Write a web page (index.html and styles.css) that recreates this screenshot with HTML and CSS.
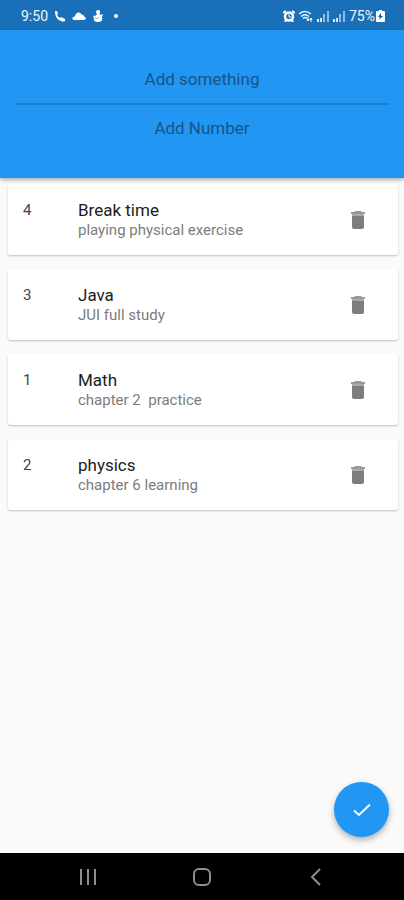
FILE: index.html
```html
<!DOCTYPE html>
<html lang="en">
<head>
<meta charset="utf-8">
<meta name="viewport" content="width=device-width, initial-scale=1">
<title>Tasks</title>
<link rel="stylesheet" href="styles.css">
</head>
<body>
<svg class="defs" aria-hidden="true">
  <symbol id="trash" viewBox="0 0 14 18">
    <path fill="#999" d="M4 0h6l1 1h3v2H0V1h3z"/>
    <path fill="#aaa" d="M1 3h12v2H1z"/>
    <path fill="#7d7d7d" d="M1 5h12v11a2 2 0 0 1-2 2H3a2 2 0 0 1-2-2z"/>
  </symbol>
  <symbol id="signal" viewBox="0 0 12 12">
    <path d="M0 9h2v3H0zM3 8h2v4H3z" fill="#d8e8f6"/>
    <path d="M6 4h2v8H6zM10 1h2v11h-2z" fill="#8fbce2"/>
  </symbol>
</svg>
<div class="status">
  <div class="status-group">
    <span class="clock">9:50</span>
    <svg width="12" height="12" viewBox="0 0 12 12"><path fill="#fff" d="M1 1h2l1 3-1 1q1 2 3 3l1-1 4 2v2q-1 1-4 0Q1 9 1 1z"/></svg>
    <svg width="14" height="12" viewBox="0 0 14 12"><path fill="#fff" d="M2 10C-.5 9.500 0 6.500 3 6.500c.5-4.500 5-5.500 6.500-2C11.500 4.500 12 6 12 6.500c2.500.5 2 3.500 0 3.500z"/></svg>
    <svg width="12" height="12" viewBox="0 0 12 12"><path fill="#fff" d="M6 0c2 0 3 2 1.500 3.500L8.500 5 11 4l-1 3c1 3-1 5-4 5s-5-2-4-4L1 6l3-.5L5 4C3.500 2.500 4 0 6 0z"/><path stroke="#7fb0da" d="M3 8l2 1 2-2" fill="none"/></svg>
    <svg class="dot" width="4" height="4" viewBox="0 0 4 4"><circle cx="2" cy="2" r="2" fill="#fff"/></svg>
  </div>
  <div class="status-group status-right">
    <svg width="12" height="12" viewBox="0 0 12 12"><circle cx="6" cy="6.500" r="4" fill="none" stroke="#fff" stroke-width="2.500"/><path d="M0 3 3 1M12 3 9 1M3 10l-1 2M9 10l1 2" fill="none" stroke="#fff" stroke-width="2"/><path d="M6 4v3h2" fill="none" stroke="#fff"/></svg>
    <svg width="14" height="12" viewBox="0 0 14 12"><path d="M0 4q6-5 12 0M2 6.500q4-3.500 8 0M4 8.500q2-2 4 0" fill="none" stroke="#e4effa" stroke-width="1.500"/><path d="M9 7v4M12 8v4M8 9l1 2 1-2M11 10l1-2 1 2" fill="none" stroke="#fff"/></svg>
    <svg width="12" height="12"><use href="#signal"/></svg>
    <svg width="12" height="12"><use href="#signal"/></svg>
    <span class="battery">75%</span>
    <svg width="9" height="12" viewBox="0 0 9 12"><path fill="#fff" d="M3 0h3v1h2q1 0 1 1v9q0 1-1 1H1q-1 0-1-1V2q0-1 1-1h2z"/><path fill="#16588f" d="M5 3 2 7h2l-1 3 4-4H5z"/></svg>
  </div>
</div>
<form class="entry" id="entry">
  <input class="field underlined" type="text" placeholder="Add something" aria-label="Add something">
  <input class="field" type="text" inputmode="numeric" placeholder="Add Number" aria-label="Add Number">
</form>
<main class="content">
  <ul class="list">
    <li class="card"><span class="num">4</span><div class="text"><h2>Break time</h2><p>playing physical exercise</p></div><button class="delete" type="button" aria-label="Delete Break time"><svg width="14" height="18"><use href="#trash"/></svg></button></li>
    <li class="card"><span class="num">3</span><div class="text"><h2>Java</h2><p>JUI full study</p></div><button class="delete" type="button" aria-label="Delete Java"><svg width="14" height="18"><use href="#trash"/></svg></button></li>
    <li class="card"><span class="num">1</span><div class="text"><h2>Math</h2><p>chapter 2&nbsp; practice</p></div><button class="delete" type="button" aria-label="Delete Math"><svg width="14" height="18"><use href="#trash"/></svg></button></li>
    <li class="card"><span class="num">2</span><div class="text"><h2>physics</h2><p>chapter 6 learning</p></div><button class="delete" type="button" aria-label="Delete physics"><svg width="14" height="18"><use href="#trash"/></svg></button></li>
  </ul>
  <button class="fab" type="submit" form="entry" aria-label="Save"><svg width="18" height="14" viewBox="0 0 18 14"><path d="M1 7.500 6 12 17 1.500" fill="none" stroke="#fff" stroke-width="2"/></svg></button>
</main>
<nav class="nav" aria-label="System">
  <button type="button" aria-label="Recent apps"><svg width="18" height="18" viewBox="0 0 18 18"><path d="M2 1v16M9 1v16M16 1v16" stroke="#8d8d8d" stroke-width="2"/></svg></button>
  <button type="button" aria-label="Home"><svg width="18" height="18" viewBox="0 0 18 18"><rect x="1" y="1" width="16" height="16" rx="5" fill="none" stroke="#8d8d8d" stroke-width="2"/></svg></button>
  <button type="button" aria-label="Back"><svg width="18" height="18" viewBox="0 0 18 18"><path d="M13 1 5 9l8 8" fill="none" stroke="#8d8d8d" stroke-width="2"/></svg></button>
</nav>
</body>
</html>
```
FILE: styles.css
```css
* {
  box-sizing: border-box;
}

body {
  margin: 0;
  min-height: 100vh;
  display: flex;
  flex-direction: column;
  background: #fafafa;
  font-family: Roboto, sans-serif;
}

button {
  border: 0;
  padding: 0;
  background: none;
  display: flex;
  align-items: center;
  justify-content: center;
  cursor: pointer;
}

.defs {
  position: absolute;
  width: 0;
  height: 0;
}

.status {
  height: 30px;
  padding: 2px 19px 0 21px;
  display: flex;
  align-items: center;
  justify-content: space-between;
  background: #1a70b8;
  color: #eef5fb;
  font-size: 14px;
}

.status-group {
  display: flex;
  align-items: center;
  gap: 6px;
}

.status-right {
  gap: 4px;
}

.dot {
  margin-left: 4px;
}

.battery {
  margin-right: -3px;
}

.entry {
  height: 148px;
  padding: 25px 15px 0;
  display: flex;
  flex-direction: column;
  background: #2196f3;
  box-shadow: 0 2px 4px rgba(0, 0, 0, 0.3);
  z-index: 1;
}

.field {
  width: 100%;
  height: 46px;
  border: 0;
  padding: 0;
  outline: 0;
  background: none;
  text-align: center;
  font: 17px Roboto, sans-serif;
  color: #123f66;
}

.field::placeholder {
  color: #165488;
  opacity: 1;
}

.underlined {
  height: 50px;
  border-bottom: 2px solid #1c80d0;
}

.content {
  flex: 1;
  display: flex;
  flex-direction: column;
  justify-content: space-between;
}

.list {
  margin: 0;
  padding: 6px 6px 0 8px;
  list-style: none;
  display: flex;
  flex-direction: column;
  gap: 14px;
}

.card {
  min-height: 71px;
  padding: 16px 20px 12px 15px;
  display: flex;
  align-items: flex-start;
  background: #fff;
  border-radius: 3px;
  box-shadow: 0 1px 2px rgba(0, 0, 0, 0.24);
}

.num {
  flex: 0 0 55px;
  font-size: 15px;
  line-height: 20px;
  color: #444;
}

.text {
  flex: 1;
}

.text h2 {
  margin: 0;
  font-size: 17px;
  font-weight: 400;
  line-height: 21px;
  color: #1c1c1c;
}

.text p {
  margin: 0;
  font-size: 15px;
  line-height: 19px;
  color: #7c7c7c;
}

.delete {
  width: 40px;
  height: 40px;
}

.fab {
  width: 55px;
  height: 55px;
  margin: 0 15px 16px 0;
  align-self: flex-end;
  border-radius: 50%;
  background: #2196f3;
  box-shadow: 0 3px 6px rgba(0, 0, 0, 0.3);
}

.nav {
  height: 47px;
  padding: 0 31px;
  display: grid;
  grid-template-columns: repeat(3, 1fr);
  background: #000;
}
```
